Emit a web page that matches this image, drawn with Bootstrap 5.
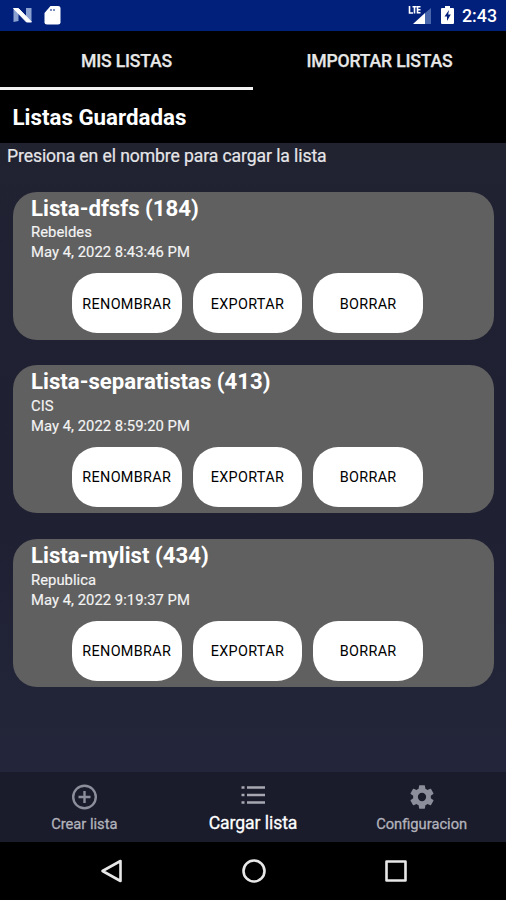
<!DOCTYPE html>
<html lang="es">
<head>
<meta charset="utf-8">
<meta name="viewport" content="width=device-width, initial-scale=1">
<title>Listas Guardadas</title>
<link href="https://cdn.jsdelivr.net/npm/bootstrap@5.3.0/dist/css/bootstrap.min.css" rel="stylesheet">
<style>
body{font-family:Roboto,sans-serif;color:#fff;background:#000;overflow:hidden}
svg{display:block}
.phone{width:506px;height:900px}
.statusbar{height:30.5px;background:#00207c;padding:0 9px 0 12px}
.clock{font-size:17.8px;font-weight:500;line-height:30px;margin-left:8px;padding-top:1px}
.tabs{height:59.5px;background:#000}
.tabs .nav-link{height:59.5px;border-bottom:3px solid transparent;color:#e8e8e8;font-size:17.6px;letter-spacing:-.16px;-webkit-text-stroke:.25px;font-weight:500;line-height:60px;padding:0}
.tabs .nav-link.active{border-color:#f2f2f2}
.heading{height:53px;background:#000;font-size:22.3px;font-weight:700;line-height:55px;padding-left:12.5px;margin:0}
.content{height:629px;background:linear-gradient(180deg,#212331 0,#20223200 12%),linear-gradient(180deg,#202232 0,#1f2032 60%,#23263a 100%)}
.hint{font-size:17.6px;letter-spacing:-.1px;-webkit-text-stroke:.2px;line-height:26px;padding-left:7px;margin:0 0 22.5px;color:#e6e6e9}
.saved{height:148px;margin:0 12px 25.8px 13px;background:#606060;border-radius:24px;padding:3px 0 0 18px}
.saved h2{font-size:22.2px;line-height:26px;font-weight:700;margin:0 0 1.6px}
.saved p{font-size:14.8px;letter-spacing:.04px;line-height:20px;margin:0;color:#f4f4f4;-webkit-text-stroke:.15px}
.actions{gap:11.2px;padding:11.3px 0 0 41px}
.actions .btn{width:109.5px;height:60px;border-radius:25px;background:#fff;color:#000;font-size:14.4px;letter-spacing:.33px;padding:2px 0 0;border:0}
.tabbar{height:70px;background:#1a1b2b}
.tabbar a{color:#b3b3bb;font-size:14.7px;line-height:20px;text-decoration:none;padding-top:12px}
.tabbar svg{color:#8d8e9b}
.tabbar a span{margin-top:4px;-webkit-text-stroke:.3px}
.tabbar a.current{color:#fff;font-size:17.6px;padding-top:10px}
.tabbar a.current span{letter-spacing:-.08px;padding-top:1px}
.tabbar a.current svg{color:#a7a8b2}
.system{height:58px;background:#000;padding:0 97px 0 99px}
</style>
</head>
<body>
<div class="phone d-flex flex-column">
<header class="statusbar d-flex align-items-center">
<svg width="21" height="22" viewBox="0 0 21 22"><path d="M1.500 5l5 1v11l-5 1zM14 4h5.500v13l-5.500 1z" fill="#8ba2d1"/><path d="M1.500 4.500h5L19.500 18h-5z" fill="#fff" stroke="#fff"/></svg>
<svg class="ms-2" width="24" height="22" viewBox="0 0 24 22"><path d="M9.500 2H17q2.500 0 2.500 2v14.500q0 2-2.500 2H6q-2.500 0-2.500-2V9z" fill="#fff"/><path d="M10 5v2M13 5v2" stroke="#6f82b8" stroke-width="1.8"/></svg>
<svg class="ms-auto" width="25" height="22" viewBox="0 0 25 22"><path d="M17 9v11H5z" fill="#fff"/><path d="M17 9l6-5v16h-6z" fill="#4766ab"/><path d="M1.500 2v7H5M4.500 2.800h4M6.500 2v7.500M12.500 2.800h-3v5.900h3M9.500 5.700h3" fill="none" stroke="#fff" stroke-width="1.6"/></svg>
<svg class="ms-2" width="13" height="20" viewBox="0 0 13 20"><path d="M4 1h5v2h3q1 0 1 1v14q0 1-1 1H1q-1 0-1-1V4q0-1 1-1h3z" fill="#fff"/><path d="M8 5L3.500 11.500h2.500v4.500l3.800-6.500H7.200z" fill="#00207c"/></svg>
<span class="clock">2:43</span>
</header>
<nav class="tabs nav nav-fill flex-nowrap">
<a class="nav-link active w-50" href="#">MIS LISTAS</a>
<a class="nav-link w-50" href="#">IMPORTAR LISTAS</a>
</nav>
<h1 class="heading">Listas Guardadas</h1>
<main class="content">
<p class="hint">Presiona en el nombre para cargar la lista</p>
<section class="saved"><h2>Lista-dfsfs (184)</h2><p>Rebeldes</p><p>May 4, 2022 8:43:46 PM</p>
<div class="actions d-flex"><button class="btn">RENOMBRAR</button><button class="btn">EXPORTAR</button><button class="btn">BORRAR</button></div></section>
<section class="saved"><h2>Lista-separatistas (413)</h2><p>CIS</p><p>May 4, 2022 8:59:20 PM</p>
<div class="actions d-flex"><button class="btn">RENOMBRAR</button><button class="btn">EXPORTAR</button><button class="btn">BORRAR</button></div></section>
<section class="saved"><h2>Lista-mylist (434)</h2><p>Republica</p><p>May 4, 2022 9:19:37 PM</p>
<div class="actions d-flex"><button class="btn">RENOMBRAR</button><button class="btn">EXPORTAR</button><button class="btn">BORRAR</button></div></section>
</main>
<nav class="tabbar row g-0">
<a class="col d-flex flex-column align-items-center" href="#"><svg width="26" height="26" viewBox="0 0 26 26" fill="none" stroke="currentColor" stroke-width="2.4"><circle cx="13.500" cy="13" r="11.300"/><path d="M13.500 7v12M7.500 13h12"/></svg><span>Crear lista</span></a>
<a class="col d-flex flex-column align-items-center current" href="#"><svg width="26" height="26" viewBox="0 0 26 26" stroke="currentColor" stroke-width="2.6"><path d="M1.500 5.500h3M7 5.500h18M1.500 13h3M7 13h18M1.500 20.500h3M7 20.500h18"/></svg><span>Cargar lista</span></a>
<a class="col d-flex flex-column align-items-center" href="#"><svg width="30" height="26" viewBox="0 1 24 22" fill="currentColor"><path d="M19.430 12.980c.04-.32.07-.64.07-.98s-.03-.66-.07-.98l2.110-1.650c.19-.15.24-.42.12-.64l-2-3.460c-.12-.22-.39-.3-.61-.22l-2.490 1c-.52-.4-1.080-.73-1.690-.98l-.38-2.650C14.460 2.180 14.250 2 14 2h-4c-.25 0-.46.18-.49.42l-.38 2.650c-.61.25-1.170.59-1.690.98l-2.490-1c-.23-.09-.49 0-.61.22l-2 3.460c-.13.22-.07.49.12.64l2.110 1.650c-.04.32-.07.65-.07.98s.03.66.07.98l-2.110 1.650c-.19.15-.24.42-.12.64l2 3.460c.12.22.39.3.61.22l2.490-1c.52.4 1.080.73 1.690.98l.38 2.650c.03.24.24.42.49.42h4c.25 0 .46-.18.49-.42l.38-2.650c.61-.25 1.170-.59 1.690-.98l2.490 1c.23.09.49 0 .61-.22l2-3.460c.12-.22.07-.49-.12-.64zM12 15.500A3.500 3.500 0 1 1 12 8.500a3.500 3.500 0 0 1 0 7z"/></svg><span>Configuracion</span></a>
</nav>
<footer class="system d-flex justify-content-between align-items-center">
<svg width="26" height="26" viewBox="0 0 26 26" fill="none" stroke="#e8e8e8" stroke-width="2.6" stroke-linejoin="round"><path d="M21.500 3v20L3.500 13z"/></svg>
<svg width="26" height="26" viewBox="0 0 26 26" fill="none" stroke="#e8e8e8" stroke-width="2.600"><circle cx="13" cy="13" r="10.500"/></svg>
<svg width="26" height="26" viewBox="0 0 26 26" fill="none" stroke="#e8e8e8" stroke-width="2.600" stroke-linejoin="round"><path d="M3.500 3.500h19v19h-19z"/></svg>
</footer>
</div>
<script src="https://cdn.jsdelivr.net/npm/bootstrap@5.3.0/dist/js/bootstrap.bundle.min.js"></script>
</body>
</html>
